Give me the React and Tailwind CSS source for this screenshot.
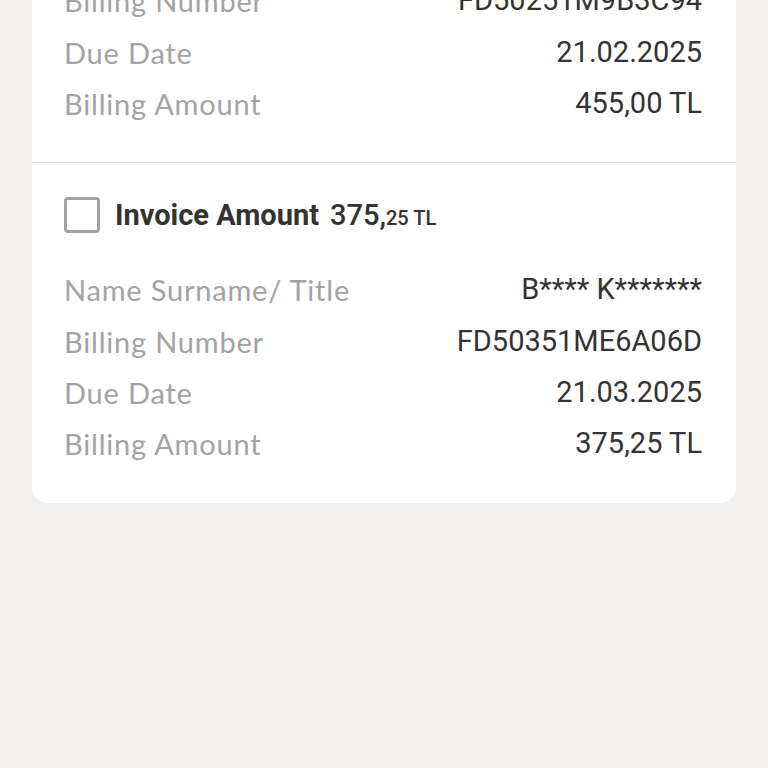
import React from "react";

const invoices = [
  {
    id: 1,
    amountInt: "455,",
    amountDec: "00 TL",
    rows: [
      ["Name Surname/ Title", "B**** K*******"],
      ["Billing Number", "FD50251M9B3C94"],
      ["Due Date", "21.02.2025"],
      ["Billing Amount", "455,00 TL"],
    ],
  },
  {
    id: 2,
    amountInt: "375,",
    amountDec: "25 TL",
    rows: [
      ["Name Surname/ Title", "B**** K*******"],
      ["Billing Number", "FD50351ME6A06D"],
      ["Due Date", "21.03.2025"],
      ["Billing Amount", "375,25 TL"],
    ],
  },
];

const InvoiceSection = ({ invoice }) => (
  <div className="pl-[32px] pr-[34px] pt-[32px] pb-[33px]">
    {/* Header */}
    <div className="flex items-center h-10">
      <div className="w-[36px] h-[36px] border-[3px] border-[#a3a3a3] rounded-[4px] bg-white" />
      <span className="ml-[15px] text-[29px] font-bold text-[#333333] font-['Roboto']">
        Invoice Amount
      </span>
      <span className="ml-[11px] text-[29px] text-[#333333] font-['Roboto'] font-medium">
        {invoice.amountInt}
        <span className="text-[20px]">{invoice.amountDec}</span>
      </span>
    </div>

    {/* Rows */}
    <div className="mt-[29px]">
      {invoice.rows.map(([label, value]) => (
        <div key={label} className="flex items-center justify-between h-[51.33px]">
          <span className="text-[29px] tracking-[0.8px] text-[#a3a3a3] font-['Lato']">{label}</span>
          <span className="text-[29px] text-[#333333] font-['Roboto']">{value}</span>
        </div>
      ))}
    </div>
  </div>
);

export default function App() {
  return (
    <div className="min-h-screen bg-[#f2f1ef] px-[32px] overflow-hidden">
      <div className="-mt-[177px] bg-white rounded-[16px]">
        {invoices.map((inv, i) => (
          <div key={inv.id} className={i > 0 ? "border-t border-[#e3e3e3]" : ""}>
            <InvoiceSection invoice={inv} />
          </div>
        ))}
      </div>
    </div>
  );
}
